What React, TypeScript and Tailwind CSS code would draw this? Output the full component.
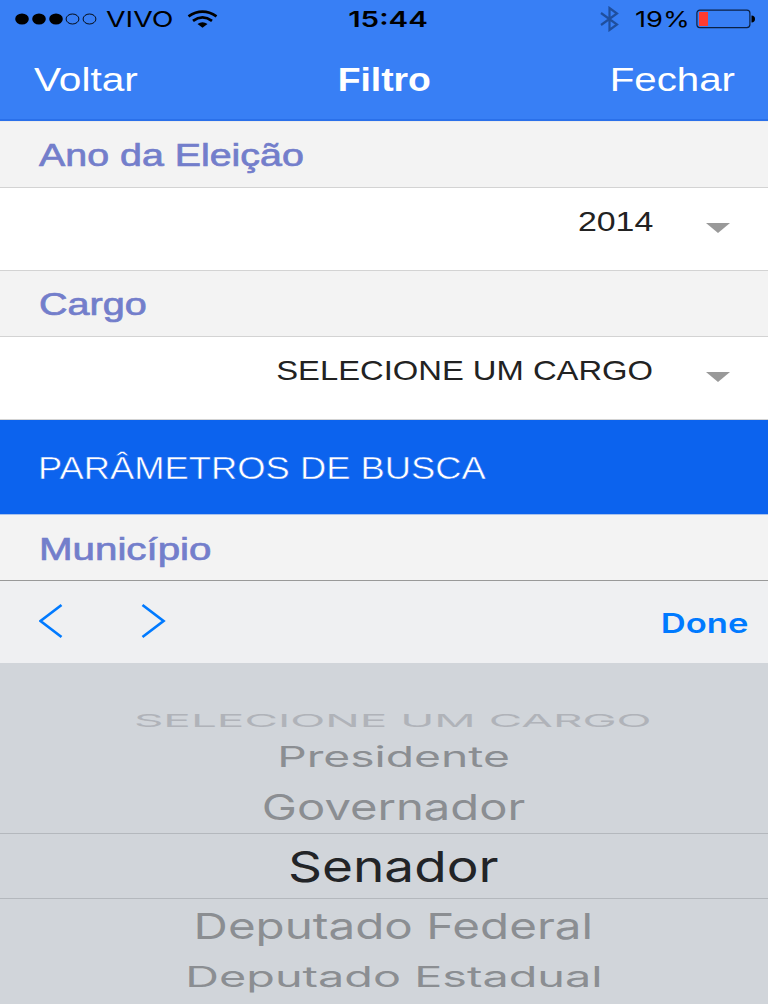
import { ReactNode } from 'react'

const helvetica = "font-['Liberation_Sans',Arial,sans-serif]"
const sanFrancisco = "font-['Inter',sans-serif]"

function SectionTitle({ children, className }: { children: ReactNode; className: string }) {
  return (
    <div className="flex h-[65px] shrink-0 items-center bg-[#f3f3f3] pl-[39px]">
      <h2 className={`origin-left whitespace-nowrap text-[31px] leading-none text-[#737ecb] [-webkit-text-stroke:0.7px_#737ecb] ${className}`}>
        {children}
      </h2>
    </div>
  )
}

function SelectRow({ children, className }: { children: ReactNode; className: string }) {
  return (
    <button className="flex h-[84px] w-full shrink-0 items-start justify-end border-y border-[#d3d3d3] bg-white pr-[38px] pt-[20px]">
      <span className={`origin-right whitespace-nowrap text-[28px] leading-[28px] text-[#222] ${className}`}>{children}</span>
      <svg className="ml-[53px] mt-[15px]" width="24" height="10" viewBox="0 0 24 10">
        <path d="M0 0H24L12 10Z" fill="#999" />
      </svg>
    </button>
  )
}

function StatusBar() {
  return (
    <div className={`flex h-[38px] items-center text-[22px] leading-none text-black ${sanFrancisco}`}>
      <div className="flex flex-1 items-center pl-[15px]">
        <svg width="82" height="12" viewBox="0 0 82 12">
          {[7, 24, 41].map(x => <ellipse key={x} cx={x} cy="6" rx="6.8" ry="5.5" />)}
          {[57.5, 74.5].map(x => <ellipse key={x} cx={x} cy="6" rx="6.4" ry="5" fill="none" stroke="#000" strokeWidth="0.9" />)}
        </svg>
        <span className="ml-[9px] w-[81px] origin-left scale-x-[1.29]">VIVO</span>
        <svg width="31" height="18" viewBox="0 0 31 18" fill="none" stroke="#000" strokeWidth="2.8">
          <path d="M1.500 6.300Q15.500 -3 29.500 6.300" />
          <path d="M6 10.800Q15.500 4 25 10.800" />
          <path d="M10.500 14Q15.500 10.300 20.500 14L15.500 17.800Z" fill="#000" stroke="none" />
        </svg>
      </div>
      <span className="ml-[6px] w-[80px] text-center font-semibold scale-x-[1.34]">15:44</span>
      <div className="flex flex-1 items-center justify-end pr-[13px]">
        <svg className="mr-[16px]" width="19" height="26" viewBox="0 0 19 26" fill="none" stroke="#1f4f9e" strokeWidth="2.2">
          <path d="M1 7L17 18.500L9.500 24V2L17 7.500L1 19" />
        </svg>
        <span className="w-[61px] origin-left scale-x-[1.24]">19%</span>
        <svg width="59" height="20" viewBox="0 0 59 20">
          <rect x="0.9" y="1.1" width="53" height="17.500" rx="3" fill="none" stroke="#0b2145" strokeWidth="1.2" />
          <rect x="3" y="3" width="9" height="14" fill="#ff3b30" />
          <path d="M55.500 6.500Q59 6.800 59 10T55.500 13.500Z" />
        </svg>
      </div>
    </div>
  )
}

export default function App() {
  return (
    <div className={`flex h-[1004px] w-[768px] flex-col overflow-hidden bg-white ${helvetica}`}>
      <header className="h-[121px] shrink-0 border-b-2 border-[#2a70ea] bg-[#387ff5]">
        <StatusBar />
        <nav className="flex h-[82px] items-center justify-between pl-[34px] pr-[33px] text-[33px] leading-none text-white">
          <button className="w-[110px] origin-left scale-x-[1.23] text-left">Voltar</button>
          <h1 className="scale-x-[1.13] font-bold">Filtro</h1>
          <button className="w-[110px] origin-right scale-x-[1.22] text-right">Fechar</button>
        </nav>
      </header>

      <div className="h-px shrink-0 bg-[#ebebeb]" />
      <SectionTitle className="scale-x-[1.27] pt-[2px]">Ano da Eleição</SectionTitle>
      <SelectRow className="scale-x-[1.21]">2014</SelectRow>
      <SectionTitle className="scale-x-[1.275] pt-[2px]">Cargo</SectionTitle>
      <SelectRow className="scale-x-[1.17]">SELECIONE UM CARGO</SelectRow>

      <div className="flex h-[95px] shrink-0 items-center border-b border-[#a9c2ec] bg-[#0c63ee] pl-[38px] pt-[3px]">
        <span className="origin-left scale-x-[1.154] whitespace-nowrap text-[31.5px] leading-none text-white [-webkit-text-stroke:0.5px_#0c63ee]">
          PARÂMETROS DE BUSCA
        </span>
      </div>
      <SectionTitle className="scale-x-[1.3] pt-[3px]">Município</SectionTitle>

      <div className="flex h-[83px] shrink-0 items-center border-t border-[#999] bg-[#eff0f2] pl-[39px] pr-[20px]">
        <svg width="128" height="36" viewBox="0 0 128 36" fill="none" stroke="#007aff" strokeWidth="2.7" className="-mt-[2px]">
          <path d="M22.500 2L1.500 18L22.500 34" />
          <path d="M103.500 2L124.500 18L103.500 34" />
        </svg>
        <button className={`ml-auto origin-right scale-x-[1.28] pt-[2px] text-[27px] font-semibold leading-none text-[#007aff] ${sanFrancisco}`}>
          Done
        </button>
      </div>

      <ul className={`flex flex-1 flex-col bg-[#d1d5da] pt-[39px] text-center text-[#8b8e92] ${sanFrancisco}`}>
        <li className="h-[38px] pl-[18px] text-[17.5px] leading-[37px] text-[#b0b3b9]">
          <span className="inline-block scale-x-[2.62]">SELECIONE UM CARGO</span>
        </li>
        <li className="h-[35px] pl-[19px] text-[28px] leading-[35px]">
          <span className="inline-block scale-x-[1.65]">Presidente</span>
        </li>
        <li className="h-[58px] pl-[19px] pt-[6px] text-[36px] leading-[52px]">
          <span className="inline-block scale-x-[1.31]">Governador</span>
        </li>
        <li className="h-[66px] border-y border-[#b4b8bd] pl-[19px] text-[43px] leading-[64px] text-[#222427]">
          <span className="inline-block scale-x-[1.235]">Senador</span>
        </li>
        <li className="h-[54px] pl-[19px] text-[36px] leading-[54px]">
          <span className="inline-block scale-x-[1.32]">Deputado Federal</span>
        </li>
        <li className="h-[48px] pl-[19px] text-[28px] leading-[48px]">
          <span className="inline-block scale-x-[1.67]">Deputado Estadual</span>
        </li>
      </ul>
    </div>
  )
}
